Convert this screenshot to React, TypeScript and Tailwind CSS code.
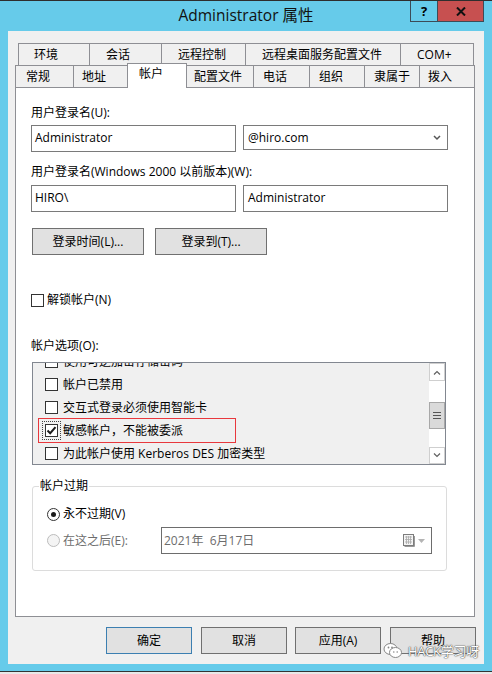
import React from 'react';

type Tab = { label: string; cls: string; selected?: boolean };

const row1: Tab[] = [
  { label: '环境', cls: 'w-[71px] pl-[15px] border-l' },
  { label: '会话', cls: 'w-[72px] pl-[16px] border-l' },
  { label: '远程控制', cls: 'w-[84px] pl-[16px] border-l' },
  { label: '远程桌面服务配置文件', cls: 'w-[155px] pl-[16px] border-l' },
  { label: 'COM+', cls: 'w-[74px] pl-[16px] border-l border-r' },
];

const row2: Tab[] = [
  { label: '常规', cls: 'w-[58px] pl-[10px] border-l' },
  { label: '地址', cls: 'w-[54px] pl-[8px] border-l' },
  { label: '帐户', cls: 'w-[60px] pl-[11px] border-l border-r', selected: true },
  { label: '配置文件', cls: 'w-[66px] pl-[7px]' },
  { label: '电话', cls: 'w-[56px] pl-[9px] border-l' },
  { label: '组织', cls: 'w-[55px] pl-[9px] border-l' },
  { label: '隶属于', cls: 'w-[55px] pl-[9px] border-l' },
  { label: '拨入', cls: 'w-[56px] pl-[8px] border-l border-r' },
];

const options = [
  { label: '使用可逆加密存储密码', checked: false },
  { label: '帐户已禁用', checked: false },
  { label: '交互式登录必须使用智能卡', checked: false },
  { label: '敏感帐户，不能被委派', checked: true },
  { label: '为此帐户使用 Kerberos DES 加密类型', checked: false },
];

function Checkbox({ checked, focused }: { checked?: boolean; focused?: boolean }) {
  return (
    <span
      className={`w-[13px] h-[13px] shrink-0 border border-[#333] bg-white flex items-center justify-center ${
        focused ? 'outline-1 outline-dotted outline-[#444] outline-offset-[2px]' : ''
      }`}
    >
      {checked && (
        <svg width="11" height="11" viewBox="0 0 11 11">
          <path d="M1.5 5.5 L4.2 8.2 L9.5 2.2" fill="none" stroke="#1a1a1a" strokeWidth="2" />
        </svg>
      )}
    </span>
  );
}

function Radio({ checked, disabled }: { checked?: boolean; disabled?: boolean }) {
  return (
    <span
      className={`w-[13px] h-[13px] shrink-0 rounded-full border flex items-center justify-center ${
        disabled ? 'border-[#bcbcbc] bg-[#f4f4f4]' : 'border-[#333] bg-white'
      }`}
    >
      {checked && <span className="w-[5px] h-[5px] rounded-full bg-[#1a1a1a]" />}
    </span>
  );
}

function Button({ label, cls }: { label: string; cls: string }) {
  return (
    <div className={`h-[27px] border bg-[#e1e1e1] flex items-center justify-center leading-[16px] ${cls}`}>
      {label}
    </div>
  );
}

export default function App() {
  return (
    <div className="relative w-[492px] h-[674px] bg-[#66cbea] border-t border-[#2e2e2e] flex flex-col font-['Open_Sans','Noto_Sans_CJK_SC',sans-serif] text-[12px] text-black">
      {/* title bar */}
      <div className="h-[30px] flex">
        <div className="w-[82px]" />
        <div className="flex-1 flex items-center justify-center text-[15.5px] text-[#111]">Administrator 属性</div>
        <div className="w-[82px] flex items-start">
          <div className="w-[28px] h-[21px] border border-t-0 border-[#3c4b57] flex items-center justify-center text-[13px] font-bold leading-none">
            ?
          </div>
          <div className="w-[46px] h-[21px] bg-[#c75050] border border-t-0 border-l-0 border-[#3c4b57] flex items-center justify-center">
            <svg width="10" height="9" viewBox="0 0 10 9">
              <path d="M1 0.5 L9 8.5 M9 0.5 L1 8.5" stroke="#111" strokeWidth="2" />
            </svg>
          </div>
        </div>
      </div>

      {/* window body */}
      <div className="mx-[8px] h-[633px] bg-[#f0f0f0] flex flex-col pt-[12px]">
        <div className="ml-[10px] flex h-[22px]">
          {row1.map((t) => (
            <div key={t.label} className={`h-[22px] border-t border-[#8e8f94] flex items-center leading-[16px] ${t.cls}`}>
              {t.label}
            </div>
          ))}
        </div>
        <div className="ml-[7px] flex items-end h-[22px]">
          {row2.map((t) =>
            t.selected ? (
              <div
                key={t.label}
                className={`relative z-10 h-[25px] -mb-px bg-white border-t border-[#8e8f94] flex items-center pb-[4px] leading-[16px] ${t.cls}`}
              >
                {t.label}
              </div>
            ) : (
              <div key={t.label} className={`h-[22px] border-t border-[#8e8f94] flex items-center leading-[16px] ${t.cls}`}>
                {t.label}
              </div>
            )
          )}
        </div>

        {/* tab page */}
        <div className="ml-[7px] w-[460px] h-[530px] border border-[#8e8f94] bg-white pl-[15px] flex flex-col">
          <div className="mt-[17px] h-[16px] leading-[16px]">用户登录名(U):</div>
          <div className="mt-[4px] flex items-start">
            <div className="w-[205px] h-[27px] border border-[#7a7a7a] bg-white px-[3px] pb-[2px] flex items-center leading-[16px]">
              Administrator
            </div>
            <div className="ml-[7px] w-[205px] h-[25px] border border-[#7a7a7a] bg-white pl-[4px] pr-[6px] flex items-center justify-between leading-[16px]">
              <span>@hiro.com</span>
              <svg width="8" height="6" viewBox="0 0 8 6">
                <path d="M1 1 L4 4 L7 1" fill="none" stroke="#555" strokeWidth="1.5" />
              </svg>
            </div>
          </div>

          <div className="mt-[12px] h-[16px] leading-[16px]">用户登录名(Windows 2000 以前版本)(W):</div>
          <div className="mt-[5px] flex">
            <div className="w-[205px] h-[27px] border border-[#7a7a7a] bg-white px-[3px] pb-[2px] flex items-center leading-[16px]">
              HIRO\
            </div>
            <div className="ml-[7px] w-[205px] h-[27px] border border-[#7a7a7a] bg-white px-[4px] pb-[2px] flex items-center leading-[16px]">
              Administrator
            </div>
          </div>

          <div className="mt-[16px] ml-[1px] flex">
            <Button label="登录时间(L)..." cls="w-[112px] border-[#707070]" />
            <Button label="登录到(T)..." cls="ml-[11px] w-[112px] border-[#707070]" />
          </div>

          <div className="mt-[37px] h-[16px] flex items-center gap-[3px] leading-[16px]">
            <Checkbox />
            <span>解锁帐户(N)</span>
          </div>

          <div className="mt-[30px] h-[16px] leading-[16px]">帐户选项(O):</div>

          {/* options list */}
          <div className="relative mt-[8px] ml-[1px] w-[414px] h-[103px] border border-[#828790] flex">
            <div className="flex-1 overflow-hidden bg-[#f0f0f0]">
              <div className="-mt-[13px] flex flex-col">
                {options.map((o) => (
                  <div key={o.label} className="h-[23px] flex items-center pl-[12px] gap-[5px] leading-[16px]">
                    <Checkbox checked={o.checked} focused={o.checked} />
                    <span>{o.label}</span>
                  </div>
                ))}
              </div>
            </div>
            <div className="w-[16px] bg-white flex flex-col">
              <div className="h-[18px] border border-[#cfcfcf] flex items-center justify-center">
                <svg width="8" height="5" viewBox="0 0 8 5">
                  <path d="M1 4.5 L4 1.5 L7 4.5" fill="none" stroke="#606060" strokeWidth="1.2" />
                </svg>
              </div>
              <div className="h-[21px]" />
              <div className="h-[27px] border border-[#a8a8a8] bg-[#dadada] flex flex-col items-center justify-center gap-[2px]">
                <span className="w-[8px] h-px bg-[#555]" />
                <span className="w-[8px] h-px bg-[#555]" />
                <span className="w-[8px] h-px bg-[#555]" />
              </div>
              <div className="flex-1" />
              <div className="h-[17px] border border-[#cfcfcf] flex items-center justify-center">
                <svg width="8" height="5" viewBox="0 0 8 5">
                  <path d="M1 0.5 L4 3.5 L7 0.5" fill="none" stroke="#606060" strokeWidth="1.2" />
                </svg>
              </div>
            </div>
            <div className="absolute left-[5px] top-[55px] w-[198px] h-[25px] border border-[#e8383d]" />
          </div>

          {/* account expiration */}
          <fieldset className="mt-[13px] ml-[1px] w-[415px] h-[93px] border border-[#dcdcdc] rounded-[3px]">
            <legend className="ml-[6px] px-[1px] leading-[16px]">帐户过期</legend>
            <div className="pl-[14px] flex flex-col">
              <div className="mt-[12px] h-[16px] flex items-center gap-[3px] leading-[16px]">
                <Radio checked />
                <span>永不过期(V)</span>
              </div>
              <div className="mt-[5px] h-[27px] flex items-center">
                <div className="w-[114px] flex items-center gap-[3px] leading-[16px] text-[#6d6d6d]">
                  <Radio disabled />
                  <span>在这之后(E):</span>
                </div>
                <div className="w-[271px] h-[27px] border border-[#6d6d6d] bg-white pl-[2px] pr-[6px] flex items-center justify-between text-[#6d6d6d] leading-[16px]">
                  <span className="whitespace-pre">2021年  6月17日</span>
                  <span className="flex items-center gap-[3px]">
                    <svg width="12" height="13" viewBox="0 0 12 13">
                      <rect x="0.5" y="0.5" width="10" height="11" fill="#f4f4f4" stroke="#7d7d7d" />
                      <path d="M2 3 H9 M2 5.5 H9 M2 8 H9 M3.5 2 V10 M5.5 2 V10 M7.5 2 V10" stroke="#a9a9a9" strokeWidth="0.8" />
                      <path d="M11.5 2 V12.5 H1.5" fill="none" stroke="#9a9a9a" />
                    </svg>
                    <svg width="7" height="4" viewBox="0 0 7 4">
                      <path d="M0 0 H7 L3.5 4 Z" fill="#b4b4b4" />
                    </svg>
                  </span>
                </div>
              </div>
            </div>
          </fieldset>
        </div>

        {/* dialog buttons */}
        <div className="mt-[10px] pl-[98px] flex">
          <Button label="确定" cls="w-[86px] border-[#3c7fb1]" />
          <Button label="取消" cls="ml-[9px] w-[86px] border-[#707070]" />
          <Button label="应用(A)" cls="ml-[8px] w-[86px] border-[#707070]" />
          <Button label="帮助" cls="ml-[9px] w-[86px] border-[#707070]" />
        </div>
      </div>

      <div className="h-[7px]" />
      <div className="h-px bg-[#333]" />
      <div className="flex-1 bg-[#e8e8e8]" />

      {/* watermark */}
      <div className="absolute left-[383px] top-[641px] flex items-center gap-[5px] text-white text-[13px] leading-[16px] [text-shadow:0_0_1px_#444,0_0_1px_#444,0_0_2px_#888]">
        <svg width="20" height="17" viewBox="0 0 20 17">
          <ellipse cx="7.5" cy="7" rx="6.5" ry="5.5" fill="#fff" stroke="#888" />
          <ellipse cx="12.5" cy="10.5" rx="6" ry="5" fill="#fff" stroke="#888" />
          <circle cx="5.5" cy="5.5" r="0.9" fill="#888" />
          <circle cx="9" cy="5.5" r="0.9" fill="#888" />
          <circle cx="10.8" cy="10" r="0.8" fill="#888" />
          <circle cx="14.2" cy="10" r="0.8" fill="#888" />
        </svg>
        <span className="tracking-[-0.3px]">HACK学习呀</span>
      </div>
    </div>
  );
}
